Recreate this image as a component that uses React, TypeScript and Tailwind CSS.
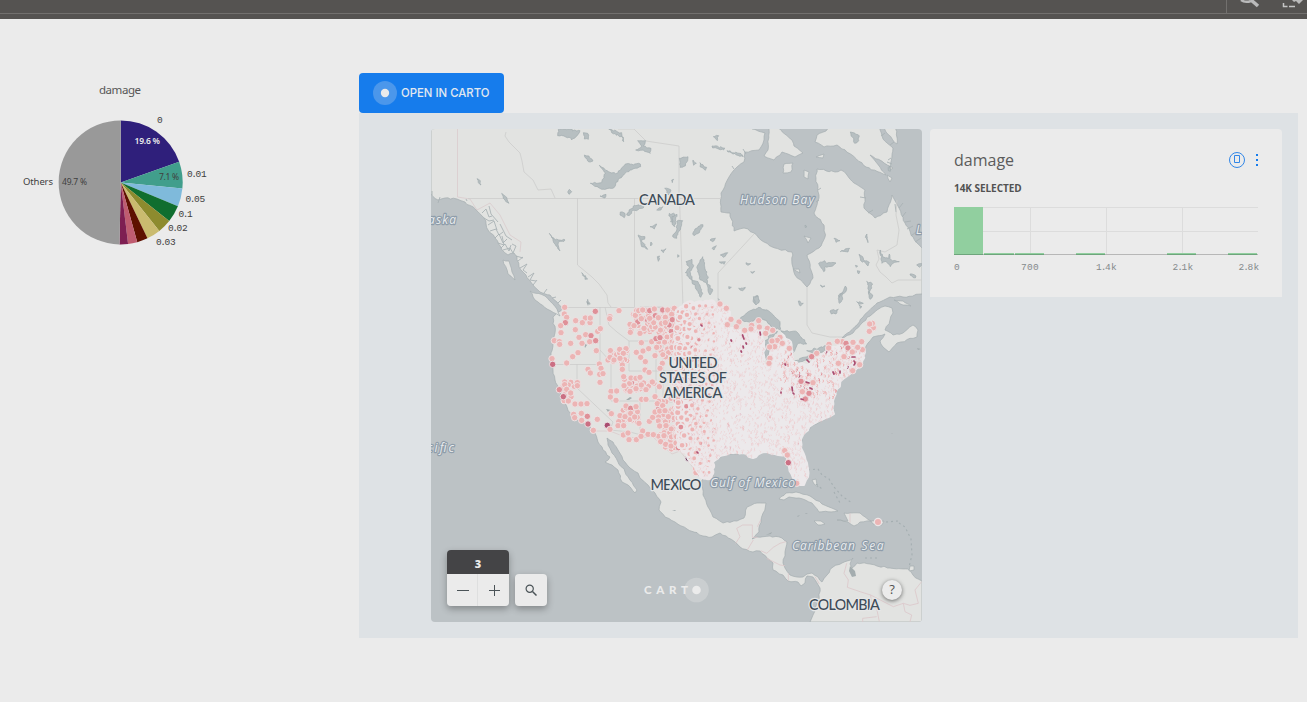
import React from "react";

type Pt = [number, number];

function makeRandom(seed: number) {
  let s = seed;
  return () => {
    s = (s * 1664525 + 1013904223) % 4294967296;
    return s / 4294967296;
  };
}

function parse(text: string): Pt[] {
  return text
    .trim()
    .split(/\s+/)
    .map((p) => p.split(",").map(Number) as Pt);
}

/* Breaks each long edge into smaller, slightly displaced ones, like a coastline. */
function coast(text: string, seed: number, amount = 0.9, step = 3): string {
  const pts = parse(text);
  const rnd = makeRandom(seed);
  const out: string[] = [];
  pts.forEach((a, i) => {
    const b = pts[(i + 1) % pts.length];
    out.push(a.join(","));
    const edge = (a[0] > 920 && b[0] > 920) || (a[1] < 130 && b[1] < 130 && a[0] > 430 && step === 3) || (a[1] > 620 && b[1] > 620) || (a[0] < 432 && b[0] < 432 && step === 3);
    if (edge) return;
    const n = Math.floor(Math.hypot(b[0] - a[0], b[1] - a[1]) / step);
    for (let k = 1; k < n; k++) {
      const t = k / n;
      out.push(
        `${(a[0] + (b[0] - a[0]) * t + (rnd() - 0.5) * 2 * amount).toFixed(1)},${(a[1] + (b[1] - a[1]) * t + (rnd() - 0.5) * 2 * amount).toFixed(1)}`
      );
    }
  });
  return out.join(" ");
}

function inside(x: number, y: number, poly: Pt[]) {
  let hit = false;
  for (let i = 0, j = poly.length - 1; i < poly.length; j = i++) {
    const [xi, yi] = poly[i];
    const [xj, yj] = poly[j];
    if (yi > y !== yj > y && x < ((xj - xi) * (y - yi)) / (yj - yi) + xi) hit = !hit;
  }
  return hit;
}

const MAINLAND =
  "431,120 431,194 438,200 445,198 457,199 465,202 477,211 484,218 488,230 495,238 502,250 508,255 514,253 517,257 519,267 526,275 533,285 540,292 550,295 557,302 563,308 553,317 555,333 553,343 551,357 553,370 555,380 560,392 567,407 572,417 582,422 590,427 595,433 598,442 603,450 610,457 605,462 612,465 618,470 622,482 628,485 635,493 637,490 630,480 625,472 618,462 612,453 608,445 607,438 613,442 618,450 623,460 630,468 638,473 640,478 648,485 655,493 661,502 659,510 665,517 675,522 687,529 703,536 712,537 720,533 735,542 740,547 753,552 760,551 767,558 773,563 773,570 783,575 788,581 798,582 801,586 805,583 807,576 813,577 817,583 820,588 819,600 813,615 810,622 922,622 922,581 913,575 908,569 890,568 877,566 870,564 857,563 852,568 850,564 853,558 842,563 833,567 827,575 822,582 818,577 812,573 807,574 803,577 797,577 790,575 785,568 783,563 785,552 787,542 782,538 770,536 757,537 752,539 759,532 761,520 766,503 757,503 747,507 744,518 737,521 723,523 713,517 708,507 703,495 702,480 710,473 713,462 723,455 743,453 753,457 757,452 777,453 787,453 790,470 797,485 805,483 808,472 805,460 800,447 802,437 813,425 827,418 834,413 832,400 837,385 845,376 857,370 862,362 865,350 868,343 873,337 885,334 880,341 883,347 889,352 897,343 917,337 918,330 913,325 903,333 893,335 885,330 890,320 893,313 892,308 885,306 877,310 863,322 853,333 842,338 857,325 863,317 877,303 890,297 903,297 922,294 922,248 917,243 905,223 899,208 892,195 887,212 875,218 864,208 865,190 854,183 847,175 841,170 835,172 817,169 816,178 818,187 819,198 814,213 824,225 825,237 819,248 807,255 813,278 807,287 795,275 792,264 792,252 775,248 764,242 754,233 744,228 734,231 730,213 721,212 721,193 729,177 737,167 744,162 745,152 759,150 764,140 765,133 752,129 752,120";

const ISLANDS = [
  "769,120 768,150 764,156 774,160 782,152 795,157 803,153 794,146 792,140 778,128 776,120",
  "817,135 826,131 836,120 876,120 883,139 893,148 890,170 893,168 870,155 886,175 866,167 852,155 837,145 824,147 815,142",
  "784,164 793,163 791,172 783,173",
  "804,170 809,172 808,179 804,177",
  "816,157 824,154 823,158",
  "804,236 811,238 808,243",
  "793,269 799,269 800,273",
  "887,175 892,178 890,182",
  "894,300 903,301 911,306 903,305",
  "503,260 509,261 512,272 515,280 508,274",
  "530,291 545,296 557,309 560,316 547,309 535,300",
  "896,120 897,144 886,132 882,120",
  "779,499 786,493 796,492 810,496 822,504 838,511 819,512 812,503 799,498 789,497 784,500",
  "837,520 848,521 844,513 860,513 871,521 860,522 854,526 848,522",
  "814,521 821,521 825,524 818,525",
  "871,521 884,521 882,525 873,524",
  "812,480 816,479 818,487 814,484",
  "910,566 914,566 914,570 909,571",
];

const LAKES_NW = [
  "400,28 465,32 458,45 440,60 432,52 398,47",
  "475,38 488,40 490,58 478,57",
  "551,27 590,38 596,65 590,50 560,38",
  "638,62 662,62 655,78 678,85 676,100 655,90 632,90 650,78",
  "478,105 492,108 504,123 490,125",
  "523,136 550,155 575,160 600,133 646,132 647,140 615,150 580,178 568,202 530,208 496,190 530,188 542,160",
  "433,208 440,215 432,223 428,216",
  "525,228 543,223 540,234",
  "586,276 600,280 598,293 585,285",
  "605,285 625,258 660,252 655,264 620,274 612,287",
  "156,176 166,182 168,195 160,188",
  "230,220 245,232 252,250 240,240",
  "373,340 390,360 420,360 400,367 405,393 390,372",
  "470,458 488,477 480,478",
  "488,538 495,553 488,550",
  "640,345 660,350 650,365 668,388 650,380",
  "675,320 695,312 688,327",
  "708,390 723,386 715,398",
  "733,280 750,283 748,310 737,306",
  "719,205 738,210 730,225",
  "697,410 704,408 700,424",
  "678,366 682,372 677,378",
  "740,180 746,178 742,188",
  "695,270 714,260 708,270",
];

const LAKES_N = [
  "120,78 158,84 155,90 122,84",
  "165,92 210,104 214,110 168,96",
  "124,50 140,47 136,62",
  "22,115 48,110 40,138 24,142",
  "63,120 73,130 65,136",
  "84,128 104,142 100,151 84,140",
  "0,290 15,283 8,320 0,312",
  "14,304 32,302 14,355 2,350 14,330",
  "62,342 78,320 93,314 82,338 66,347",
  "114,360 130,354 122,365",
  "120,385 133,377 126,390",
  "145,405 167,398 154,412",
  "142,426 160,425 156,433",
  "42,425 60,418 64,440 54,455 60,480 78,485 92,520 86,532 60,482 40,458 52,445",
  "75,440 82,428 92,410 98,440 108,470 106,490 122,512 114,525 104,492 82,475",
  "222,428 236,431 228,436",
  "236,455 248,454 240,460",
  "200,504 220,502 212,512 204,510",
  "247,532 258,527 261,545 250,552 243,545",
  "486,355 504,362 492,367",
  "505,395 533,385 528,396",
  "440,430 458,422 464,430 492,429 482,438 460,440 455,455",
  "561,403 572,410 574,420 592,427 588,438 580,428 566,422",
  "585,342 588,368 580,352",
  "625,390 632,410 650,415 652,402 658,420 682,425 663,430 655,440 642,424 630,430",
  "500,525 514,512 520,498 524,504 516,520 503,535",
  "584,484 602,492 592,519",
  "554,545 574,550 560,553",
  "445,495 459,498 450,502",
  "714,462 732,468 730,474",
  "734,435 752,431 742,442",
  "535,36 562,48 560,62 548,70 542,52",
  "653,138 655,154 649,152",
  "399,315 405,320 400,323",
  "17,404 22,408 17,412",
  "170,500 178,502 171,507",
  "550,436 557,438 553,442",
  "556,452 564,454 560,462",
];

const GREAT_LAKES = [
  "150,85 175,65 205,52 235,62 250,75 270,95 272,118 245,115 230,92 205,82 180,98 165,95",
  "224,155 240,135 262,123 244,145 238,180 232,210 224,200",
  "272,122 320,125 345,155 350,162 325,160 308,190 302,175 295,150",
  "300,222 340,202 362,195 352,210 315,224",
  "350,182 385,175 410,167 404,184 370,192",
  "190,20 204,18 207,38 198,45",
  "325,33 340,40 332,48",
  "85,26 93,40 84,36",
  "420,63 445,58 438,72 424,72",
  "445,25 450,18 456,8 458,28 448,40",
  "535,5 548,15 540,28",
  "507,45 516,50 510,55",
];

const LINES = [
  "M457.5 129V197L470 199L477 210L490 203L500 215L510 235L521 242L520 252",
  "M506 132L505 136L509 142L514 147L520 153L522 161L524 172L533 180L538 190L551 189L555 198",
  "M468 198.5H721",
  "M577.5 198V265L592 277L599 284L607 295L608 303L611 307",
  "M634.5 198V307M563 307.5H716",
  "M679.5 198L683 307M618 129L634 129L646 141L679 146V198",
  "M718 307V273L754 234M807 287V325L812 333L830 337L842 337",
  "M897 200L896 215L899 230L897 245L885 252L877 250L879 259L876 265L880 272L886 277L892 283L898 280H922",
  "M553 364.5H600V350M577 364V388L613 422L610 430L630 432L645 436M611 364V401M600 307V350L609 360",
  "M605 307L609 325L617 332L629 341V371H656V401H611M629 341H656V371M640 307H663V420M663 340H695M656 371H690V402H656M640 402V438",
  "M590 431L610 431L625 437L641 438L652 436L663 446L672 454L680 451L695 470L704 478",
];

const SOUTH_LINES = [
  "M197 250L210 230L200 205L218 195H247V232L262 232M272 180L262 200M232 270L250 240",
  "M272 272L290 280L310 262L330 250L348 245M290 295L330 315L345 317",
  "M355 340V362M540 160V188M435 350L448 372",
  "M530 310L522 340L535 360L532 382L570 395L602 405L605 440L620 445L628 485",
  "M602 405L650 430L670 440L700 430L720 436L745 430L735 390L755 365M700 430L705 455L725 465L720 486M578 486V475L620 470",
];

const WEST_DOTS =
  "104,52,0 103,72,0 110,82,0 106,98,1 92,107,0 93,128,0 137,92,0 166,84,0 157,98,0 180,98,0 181,84,0 136,119,0 147,142,0 167,134,0 183,137,1 196,64,1 203,124,0 211,116,0 179,155,0 197,152,1 156,160,0 122,160,0 73,152,0 88,155,0 89,163,0 66,206,0 68,223,2 110,219,0 128,200,0 144,188,0 199,182,0 240,80,0 239,86,0 267,62,0 208,222,0 213,235,0 209,253,0 210,277,0 219,251,0 174,238,0 181,249,0 234,210,0 240,202,0 252,210,0 269,178,0 288,176,0 280,190,0 270,205,0 277,225,0 277,238,0 281,260,0 300,103,0 303,120,0 301,127,0 316,76,0 323,96,1 334,86,0 326,62,0 338,60,0 359,62,1 359,85,0 373,57,0 376,77,1 385,83,0 398,60,1 413,60,0 406,82,0 425,73,0 433,55,0 406,98,0 427,89,1 330,130,0 342,115,0 312,107,0 334,158,0 319,187,0 339,183,0 332,202,0 356,176,0 365,155,0 378,146,1 390,143,1 380,172,0 346,215,0 375,197,0 397,220,0 345,240,0 357,247,0 390,235,0 303,264,0 318,265,0 330,262,0 282,287,0 300,304,0 318,296,0 334,285,0 348,299,0 367,276,0 388,290,0 335,328,0 348,328,0 375,320,0 382,341,0 398,347,0 104,276,0 104,284,0 88,299,1 100,320,2 110,298,0 122,309,0 115,333,0 142,278,0 142,287,0 135,342,0 153,342,0 171,341,0 131,373,0 134,383,0 154,370,0 155,391,0 172,379,1 174,402,2 190,421,0 202,388,0 232,406,3 240,418,0 243,304,0 260,303,0 241,321,0 258,331,0 244,371,0 288,348,0 302,355,1 318,350,0 270,377,0 266,395,0 285,380,0 264,407,0 281,407,0 302,370,0 314,381,0 327,400,0 280,435,0 294,429,0 297,449,0 319,449,0 338,423,0 333,439,0 354,433,0 370,434,0 358,394,0 368,382,0 375,366,0 389,363,0 405,362,0 415,380,0 389,408,0 408,407,0 402,437,0 392,455,0 407,463,0 423,468,0 438,459,0 445,473,1 463,481,0 480,490,0 475,505,4 497,487,0 502,490,1 457,455,0 440,440,0 511,550,3 494,515,0 497,537,0 498,548,0 568,42,0 589,54,0";

const EAST_DOTS =
  "90,42,0 109,55,0 123,88,0 112,104,0 147,96,0 139,110,0 164,121,0 185,106,0 206,92,0 208,111,0 232,115,0 227,130,0 248,121,0 183,117,0 270,142,0 262,151,0 246,153,0 254,170,0 239,171,0 298,175,0 277,160,0 240,205,0 237,220,0 417,163,0 416,174,0 457,155,0 442,154,0 468,160,1 474,174,1 489,157,0 515,155,0 517,179,0 503,172,0 487,186,0 550,113,0 547,100,0 539,102,0 538,124,0 509,224,0 488,242,0 462,200,0 445,220,0 380,190,0 365,200,1 333,274,1 369,278,0 337,305,0 357,310,1 346,327,1 295,518,2 284,482,0 292,495,0 320,580,0";

const TONES = ["#ecb4b4", "#df9098", "#cb6f83", "#a94c70", "#5f2f52"];
const DENSE = "678,309 690,304 722,304 730,312 727,326 741,330 762,328 764,345 764,365 770,365 770,345 782,334 791,342 793,362 808,365 830,348 845,344 862,342 865,352 862,365 850,374 843,379 837,389 833,401 834,414 822,420 809,427 802,437 801,448 807,463 808,477 804,485 795,483 789,467 786,455 775,454 764,452 753,458 743,453 730,453 720,456 711,464 709,476 701,476 695,467 688,455 680,446 678,424 674,390 677,365 676,340";

function dots(text: string, ox: number, oy: number) {
  return text.split(" ").map((item, i) => {
    const [x, y, tone] = item.split(",").map(Number);
    return <circle key={i} cx={ox + x / 3} cy={oy + y / 3} r={3.2} fill={TONES[tone]} stroke="#ece5e6" strokeWidth={0.9} />;
  });
}

function Storms() {
  const poly = parse(DENSE);
  const rnd = makeRandom(41);
  const scatter: React.ReactNode[] = [];
  const band = (n: number, x0: number, x1: number, y0: number, y1: number, k: string) => {
    for (let i = 0; i < n; i++) {
      const x = x0 + rnd() * (x1 - x0);
      const y = y0 + rnd() * (y1 - y0);
      scatter.push(
        <circle key={k + i} cx={x} cy={y} r={3.1} fill={TONES[rnd() > 0.95 ? 1 : 0]} stroke="#ece5e6" strokeWidth={1} />
      );
    }
  };
  band(26, 633, 660, 310, 332, "a");
  band(100, 658, 686, 308, 358, "b");
  band(18, 610, 628, 350, 362, "c");
  band(22, 624, 655, 377, 391, "d");
  band(20, 622, 638, 407, 423, "e");
  band(80, 657, 688, 398, 440, "f");
  band(28, 665, 692, 436, 449, "g");
  band(12, 562, 575, 380, 402, "h");
  const crescents: React.ReactNode[] = [];
  for (let i = 0; i < 900; i++) {
    const x = 675 + Math.pow(rnd(), 1.6) * 40;
    const y = 304 + rnd() * 182;
    if (!inside(x, y, poly)) continue;
    crescents.push(
      <circle key={i} cx={x} cy={y} r={3.1} fill={TONES[rnd() > 0.96 ? 1 : 0]} stroke="#ece7e9" strokeWidth={1 + (x - 675) / 14} />
    );
  }
  const specks: React.ReactNode[] = [];
  for (let i = 0; i < 3000; i++) {
    const x = 690 + rnd() * 176;
    const y = 304 + rnd() * 182;
    if (!inside(x, y, poly)) continue;
    const h = 0.6 + rnd() * 2;
    const tilt = (rnd() - 0.5) * 2;
    const dark = rnd() > 0.985;
    specks.push(
      <path
        key={i}
        d={`M${x.toFixed(1)} ${y.toFixed(1)}q${(tilt + 0.7).toFixed(1)} ${(h / 2).toFixed(1)} ${tilt.toFixed(1)} ${h.toFixed(1)}`}
        stroke={dark ? TONES[2] : "#edb5b7"}
        strokeWidth={0.5}
        opacity={0.7}
      />
    );
  }
  for (let i = 0; i < 190; i++) {
    const x = 780 + rnd() * 82;
    const y = 345 + rnd() * 52;
    if (!inside(x, y, poly)) continue;
    const t = rnd();
    specks.push(
      <path key={"n" + i} d={`M${x.toFixed(1)} ${y.toFixed(1)}q1.2 1 ${((rnd() - 0.5) * 2).toFixed(1)} 2.4`} stroke={TONES[t > 0.95 ? 3 : t > 0.7 ? 1 : 0]} strokeWidth={1} />
    );
  }
  return (
    <g>
      {scatter}
      {dots(WEST_DOTS, 530, 290)}
      <polygon points={coast(DENSE, 9, 1)} fill="#ece9eb" stroke="#ece9eb" strokeWidth={2} strokeLinejoin="round" />
      {crescents}
      <g fill="none" strokeLinecap="round">{specks}</g>
      {dots(EAST_DOTS, 690, 290)}
      <g stroke="#a94c70" strokeWidth={1.7} fill="none" strokeLinecap="round">
        <path d="M742.500 335l1.500 4M743 346l.5 2M746 343l.5 1M760 332l.5 3M741 351l.5 1M731 340l.5 1M701 325l1 1M785 364l.5 1M807 360l2 2M792 387l.5 4M793 393l1 1M801 399l2 .5M810 388l2 1M806 382l3 1M854 361q2 2 0 4M852 357l3 0M840 371l0 2M833 372l1 2M781 392v1M697 452l1 1" />
      </g>
      <circle cx={878} cy={522} r={3.6} fill="#ecb4b4" stroke="#ece5e6" strokeWidth={1.2} />
    </g>
  );
}

function Country({ x, y, w, children }: { x: number; y: number; w: number; children: string }) {
  return (
    <text x={x} y={y} textLength={w} textAnchor="middle" fontFamily="Lato, sans-serif" fontSize={14.5} fontWeight={500} fill="#3e4c58" stroke="#e6e7e7" strokeWidth={2.4} strokeLinejoin="round" paintOrder="stroke">
      {children}
    </text>
  );
}

function Sea({ x, y, w, children }: { x: number; y: number; w: number; children: string }) {
  return (
    <text x={x} y={y} textLength={w} fontFamily="Open Sans, sans-serif" fontStyle="italic" fontWeight={500} fontSize={12} fill="#e8ebed" stroke="#8f9daa" strokeWidth={2.4} strokeLinejoin="round" paintOrder="stroke">
      {children}
    </text>
  );
}

function MapDrawing() {
  return (
    <svg className="block h-full w-full" viewBox="431 129 491 493" aria-label="Storm damage map">
      <rect x={431} y={129} width={491} height={493} fill="#bcc2c5" />
      <g fill="#e2e3e1" stroke="#a5aeb0" strokeWidth={0.7}>
        <polygon points={coast(MAINLAND, 5, 0.8)} />
        {ISLANDS.map((p, i) => (
          <polygon key={i} points={coast(p, i + 20, 0.6)} />
        ))}
      </g>
      <g stroke="#a9b2b4" strokeWidth={0.9} fill="none">
        <path d="M432 191v4M440 197l-2 6M467 201l-1-2M482 213l4-4 3 8 3-1M484 218l5 3 5-1M488 225l6-4 3 9M490 231l6-2 3 6 4-3M495 238l4-4 4 9 4-4M498 243l6 2-2-9M501 248l4-4 4 7 2-6M503 250l7-2 3 5 3-7-4-2M489 206l2 8 7 8M500 224l6 12 6 4M516 256l7 2M518 261l5-4M520 268l7-4-4 6 4 3M528 277l6-4-4 7 6 1M533 285l4-5M544 293l3-4M552 298l4-1M558 303l3-3" />
        <path d="M899 208l4-5M902 217l4-5M905 222l6-1M907 229l6-3M911 236l5-4M915 242l6-4M895 204l1 8M866 198l-6-1M868 213l5-3M818 190l3-2M819 200l-3 2M746 154l-3-5M734 169l-2-3M890 145l4-3M891 158l-3 2M892 164l-5-2M881 136l4-3" />
      </g>
      <g fill="none" stroke="#cfcfce" strokeWidth={0.8} strokeLinejoin="round">
        {LINES.map((d, i) => (
          <path key={i} d={d} stroke={i === 0 || i === 10 ? "#dacbcd" : "#cdcdcc"} />
        ))}
      </g>
      <g transform="translate(670 460) scale(.333333)" fill="none" stroke="#dcc7c9" strokeWidth={2.4}>
        {SOUTH_LINES.map((d, i) => (
          <path key={i} d={d} />
        ))}
      </g>
      {[
        { list: LAKES_NW, at: "translate(425 120) scale(.333333)", seed: 100 },
        { list: LAKES_N, at: "translate(672 120) scale(.333333)", seed: 200 },
        { list: GREAT_LAKES, at: "translate(690 290) scale(.333333)", seed: 300 },
      ].map((g) => (
        <g key={g.seed} transform={g.at} fill="#b7bfc1" stroke="#a0abad" strokeWidth={2} strokeLinejoin="round">
          {g.list.map((p, i) => (
            <polygon key={i} points={coast(p, g.seed + i, 2.6, 5)} />
          ))}
        </g>
      ))}
      <g fill="#a4adaf">
        <path d="M586 301l3 2-1 3zM584 343l3 2-2 3zM606 409l5 1-3 2zM609 407l1 3zM626 400l4-3 2 1-3 2zM587 454l1 2zM628 518l1 1zM672 510l4 0-1 1zM654 502l1 1zM766 535l6-3-1 2zM797 516l3-1-2 2zM805 513l3 0-2 1zM891 434l2-1-1 1zM917 348l4 1-3 1zM852 260l-1 6zM850 566l5 5 1 5-4 1-3-6z" />
      </g>
      <g fill="none" stroke="#a4aeb1" strokeWidth={1.1} strokeDasharray="2 3">
        <path d="M808 470l10-1 4 6 7 4 5 8 8 9 10 7M816 484l6 5M834 492l6 11M886 522l12-1M899 523l6 4 6 12 1 16-3 12M865 558l12 0" />
      </g>
      <Storms />
      <Country x={667} y={204.500} w={56}>CANADA</Country>
      <Country x={693} y={368} w={49}>UNITED</Country>
      <Country x={693} y={383} w={68}>STATES OF</Country>
      <Country x={693} y={398} w={59}>AMERICA</Country>
      <Country x={676} y={490} w={51}>MEXICO</Country>
      <Country x={844.500} y={609.500} w={71}>COLOMBIA</Country>
      <Sea x={740} y={203.500} w={74}>Hudson Bay</Sea>
      <Sea x={710} y={486.500} w={85}>Gulf of Mexico</Sea>
      <Sea x={792} y={550} w={63}>Caribbean</Sea>
      <Sea x={861.500} y={550} w={22}>Sea</Sea>
      <Sea x={428} y={224} w={28}>aska</Sea>
      <Sea x={427} y={452} w={27}>cific</Sea>
      <Sea x={916} y={234} w={8}>L</Sea>
      <g fill="#ebebeb">
        <text x={644} y={594} textLength={44} fontFamily="Lato, sans-serif" fontWeight={900} fontSize={11.500}>CART</text>
        <circle cx={696.500} cy={590} r={12.300} opacity={0.3} />
        <circle cx={696.500} cy={590} r={4.300} />
      </g>
    </svg>
  );
}

const SLICES: { share: number; color: string }[] = [
  { share: 19.6, color: "#2f1f7b" },
  { share: 7.0, color: "#419e8c" },
  { share: 4.7, color: "#7fbadb" },
  { share: 4.4, color: "#106e2f" },
  { share: 3.6, color: "#8d8b2e" },
  { share: 3.6, color: "#cabb6f" },
  { share: 2.8, color: "#5e1000" },
  { share: 2.4, color: "#bf5c70" },
  { share: 2.2, color: "#7e1f52" },
  { share: 49.7, color: "#999999" },
];

/* Label with a fixed advance for digits and a narrow one for points and spaces. */
function Figures({ x, y, step = 5.5, narrow = 3.1, size = 9.5, fill, weight, children }: { x: number; y: number; step?: number; narrow?: number; size?: number; fill?: string; weight?: number; children: string }) {
  const places: number[] = [];
  let at = x;
  for (const c of children) {
    places.push(c === "." ? at - 1.2 : at);
    at += c === "." || c === " " ? narrow : step;
  }
  return (
    <text x={places.join(" ")} y={y} fontFamily="Liberation Mono, monospace" fontSize={size} fill={fill} fontWeight={weight}>
      {children}
    </text>
  );
}

function PieChart() {
  let total = 0;
  const point = (p: number) => {
    const a = (p / 100) * Math.PI * 2;
    return `${(120.7 + 62 * Math.sin(a)).toFixed(2)} ${(182.4 - 62 * Math.cos(a)).toFixed(2)}`;
  };
  return (
    <svg className="block h-[180px] w-[240px]" viewBox="0 73 240 180">
      <text x={99} y={94} textLength={42} fontFamily="Noto Sans, sans-serif" fontSize={11.500} fill="#565656">damage</text>
      {SLICES.map((s) => {
        const from = total;
        total += s.share;
        return <path key={s.color} d={`M120.7 182.4L${point(from)}A62 62 0 0 1 ${point(total)}Z`} fill={s.color} />;
      })}
      <g fill="#404040">
        <Figures x={157} y={123}>0</Figures>
        <Figures x={187} y={177}>0.01</Figures>
        <Figures x={185.500} y={202}>0.05</Figures>
        <Figures x={178.500} y={217}>0.1</Figures>
        <Figures x={168} y={231}>0.02</Figures>
        <Figures x={156} y={245}>0.03</Figures>
        <text x={23} y={185} textLength={30} fontSize={9.500} fontFamily="Noto Sans, sans-serif">Others</text>
        <g fontSize={8.500} fontFamily="Noto Sans, sans-serif">
          <text x={62} y={185} textLength={25}>49.7 %</text>
          <text x={159} y={180} textLength={20}>7.1 %</text>
          <text x={134.500} y={144} textLength={25.500} fontWeight={600} fill="#ebebeb">19.6 %</text>
        </g>
      </g>
    </svg>
  );
}

function Histogram() {
  return (
    <svg className="mt-3 block h-[68px] w-[306px]" viewBox="954 207 306 68" shapeRendering="crispEdges">
      <path d="M954 207.500h304M954 231.500h304M1030.500 207v48M1106.500 207v48M1182.500 207v48" stroke="#dcdcdc" fill="none" />
      <path d="M954 254.500h304" stroke="#b7b7b7" />
      <path d="M954 207h29v47h-29zM984 253h30v1h-30zM1015 253h29v1h-29zM1076 253h29v1h-29zM1167 253h29v1h-29zM1228 253h29v1h-29z" fill="#91cf9f" />
      <path d="M954 254h29v1h-29zM984 254h30v1h-30zM1015 254h29v1h-29zM1076 254h29v1h-29zM1167 254h29v1h-29zM1228 254h29v1h-29z" fill="#6ea57c" />
      <g fill="#858a8c">
        <Figures x={954} y={270} step={6}>0</Figures>
        <Figures x={1021} y={270} step={6}>700</Figures>
        <Figures x={1096} y={270} step={6}>1.4k</Figures>
        <Figures x={1172.500} y={270} step={6}>2.1k</Figures>
        <Figures x={1238.500} y={270} step={6}>2.8k</Figures>
      </g>
    </svg>
  );
}

export default function App() {
  return (
    <div className="flex h-[702px] w-[1307px] flex-col overflow-hidden bg-[#ebebeb] font-['Open_Sans',sans-serif]">
      <header className="flex h-[19px] shrink-0 flex-col bg-[#555351]">
        <div className="flex h-[14px] justify-end border-b border-[#72706e]">
          <div className="w-[81px] border-l border-[#72706e]">
            <svg className="block h-[13px] w-20" viewBox="1227 0 80 13" fill="none">
              <path d="M1241 0q4 3 10 1" stroke="#bababa" strokeWidth={2.500} />
              <path d="M1251 0l7 6" stroke="#bababa" strokeWidth={3.500} />
              <path d="M1283.500 3v3.500h4M1289 6.500h6" stroke="#c5c5c5" strokeWidth={1.500} />
              <path d="M1292 0h11l-4 4-3-3-2 1z" fill="#bababa" />
            </svg>
          </div>
        </div>
      </header>
      <main className="flex flex-1 pt-[54px]">
        <aside className="w-[359px] shrink-0">
          <PieChart />
        </aside>
        <section className="flex w-[939px] flex-col items-start">
          <button className="flex h-10 w-[145px] items-center rounded bg-[#167cec] pl-3.5 text-[#e1e8f0]">
            <svg className="h-6 w-6" viewBox="0 0 24 24">
              <circle cx={12} cy={12} r={12} fill="#4b97eb" />
              <circle cx={12} cy={12} r={4.200} fill="#ebebeb" />
            </svg>
            <svg className="h-6 w-[100px] overflow-visible" viewBox="0 0 100 24">
              <text x={4} y={16.300} textLength={88.500} lengthAdjust="spacingAndGlyphs" fill="#e1e8f0" fontFamily="Inter, sans-serif" fontWeight={500} fontSize={12}>OPEN IN CARTO</text>
            </svg>
          </button>
          <div className="flex h-[525px] w-full items-start gap-2 bg-[#dee2e5] py-4 pl-[72px]">
            <div className="relative h-[493px] w-[491px] overflow-hidden rounded">
              <MapDrawing />
              <div className="absolute bottom-4 left-4 flex items-end gap-1.5 text-[#4a5357]">
                <div className="w-[62px] rounded shadow-[0_3px_7px_rgba(0,0,0,0.3)]">
                  <div className="flex h-6 items-center justify-center rounded-t bg-[#444446] pt-1 font-['Open_Sans'] text-[11px] font-extrabold text-[#ebebeb]">3</div>
                  <div className="flex h-8 rounded-b bg-[#ebebeb]">
                    <button className="flex w-[31px] items-center justify-center border-r border-[#dedfdf] pl-0.5">
                      <svg className="h-3 w-3" viewBox="0 0 12 12"><path d="M0 6.500h12" stroke="currentColor" /></svg>
                    </button>
                    <button className="flex w-[31px] items-center justify-center">
                      <svg className="h-3 w-3" viewBox="0 0 12 12"><path d="M1 6.500h11M6.500 1v11" stroke="currentColor" /></svg>
                    </button>
                  </div>
                </div>
                <button className="flex h-8 w-8 items-center justify-center rounded bg-[#ebebeb] shadow-[0_3px_7px_rgba(0,0,0,0.3)]">
                  <svg className="h-3 w-3" viewBox="0 0 12 12" fill="none" stroke="currentColor"><circle cx={4.700} cy={4.700} r={3.600} strokeWidth={1.200} /><path d="M7.500 7.500l4 4" strokeWidth={1.500} /></svg>
                </button>
              </div>
              <button className="absolute right-5 bottom-[22px] flex h-5 w-5 items-center justify-center rounded-full bg-[#ebebeb] text-[13px] text-[#515151] shadow-[0_1px_4px_rgba(0,0,0,0.55)]">?</button>
            </div>
            <article className="h-[168px] w-[352px] rounded-t bg-[#ebebeb] px-6 pt-[18px]">
              <div className="flex h-[26px] items-center justify-between">
                <h2 className="text-[16px] leading-[26px] text-[#5c5c5c]">damage</h2>
                <div className="-mr-1 flex items-center gap-2">
                  <svg className="h-4 w-4" viewBox="0 0 16 16" fill="none" stroke="#3186e7">
                    <circle cx={8} cy={8} r={7.500} />
                    <path d="M5.500 3.500h5v7h-5z" />
                  </svg>
                  <svg className="mx-[3px] -mt-px h-3 w-[3px] overflow-visible" viewBox="0 0 3 12" fill="#167cec"><path d="M0 0h2v2H0zM0 5h2v2H0zM0 10h2v2H0z" /></svg>
                </div>
              </div>
              <p className="mt-[9px] h-[13px] text-[10px] leading-[13px] font-bold tracking-[-0.05px] text-[#525252]">14K SELECTED</p>
              <Histogram />
            </article>
          </div>
        </section>
      </main>
    </div>
  );
}
